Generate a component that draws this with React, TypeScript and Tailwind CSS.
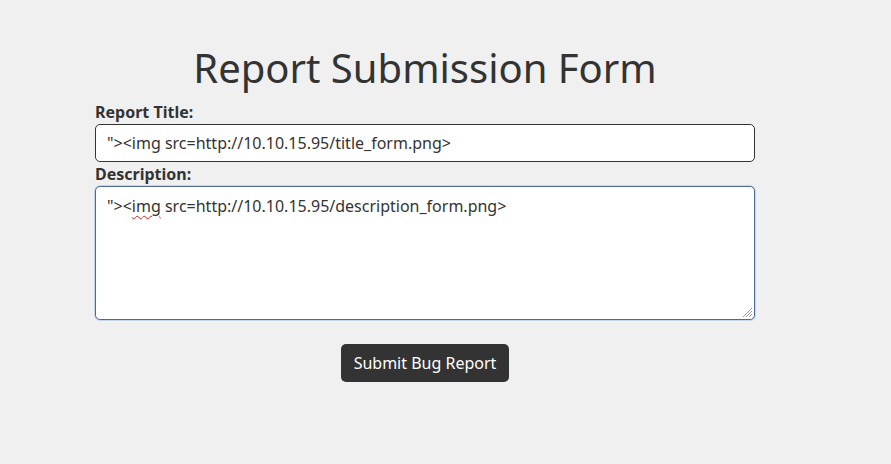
export default function App() {
    return (
        <div className="min-h-[464px] w-full bg-[#f0f0f0] text-[#333333] font-['Noto_Sans',sans-serif]">
            <div className="ml-[95px] w-[660px] pt-[44px] flex flex-col">
                {/* Heading */}
                <h1 className="text-center text-[40px] leading-[48px] font-normal mb-[8px]">Report Submission Form</h1>

                {/* Title field */}
                <label className="text-[16px] leading-[24px] font-bold">Report Title:</label>
                <div className="h-[38px] bg-white border border-[#333333] rounded-[5px] px-[11px] flex items-center text-[16px]">
                    "&gt;&lt;img src=http://10.10.15.95/title_form.png&gt;
                </div>

                {/* Description field */}
                <label className="text-[16px] leading-[24px] font-bold">Description:</label>
                <div className="relative h-[134px] bg-white border border-[#50699b] rounded-[5px] px-[11px] py-[8px] text-[16px] leading-[22px] shadow-[0_0_0_1px_#c6d6ef]">
                    "&gt;&lt;<span className="underline decoration-wavy decoration-[#d42020] decoration-1 underline-offset-[3px]">img</span> src=http://10.10.15.95/description_form.png&gt;
                    <svg className="absolute right-[1px] bottom-[1px]" width="11" height="11" viewBox="0 0 11 11">
                        <path d="M10 1 L1 10 M10 4 L4 10 M10 7 L7 10" stroke="#9a9a9a" strokeWidth="1" fill="none" />
                    </svg>
                </div>

                {/* Submit */}
                <div className="flex justify-center mt-[24px]">
                    <button className="w-[168px] h-[38px] bg-[#333333] text-white text-[16px] rounded-[5px]">Submit Bug Report</button>
                </div>
            </div>
        </div>
    )
}
